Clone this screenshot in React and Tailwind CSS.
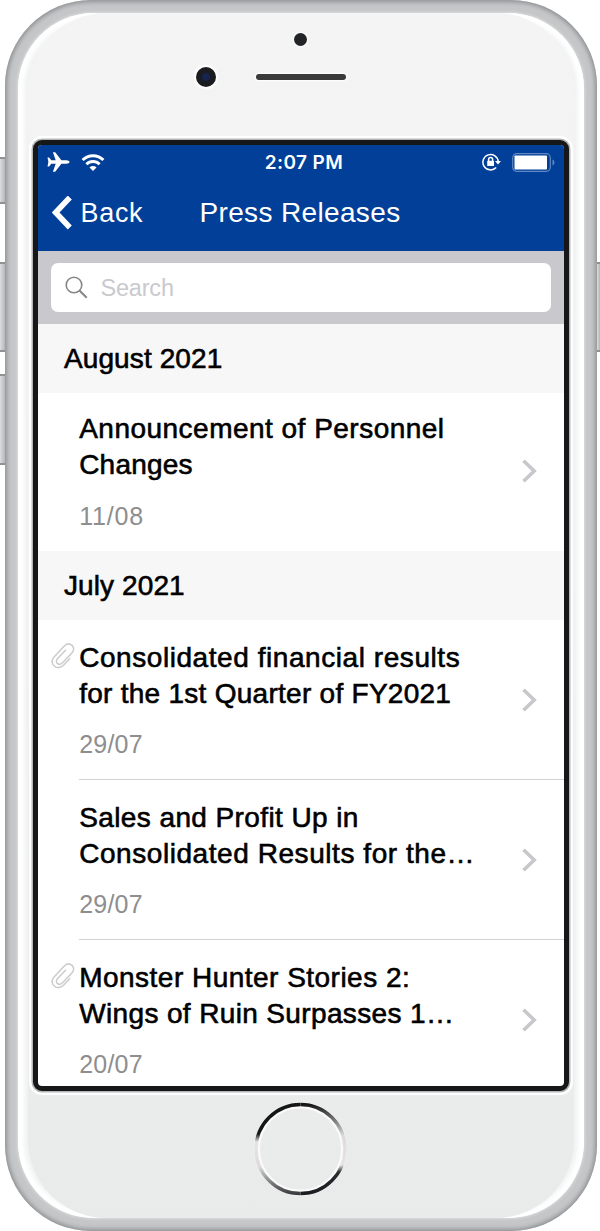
const sections = [
  {
    title: "August 2021",
    spacing: "tracking-[0.1px]",
    items: [
      {
        id: 1,
        date: "11/08",
        dateSpacing: "tracking-[0.8px]",
        lines: [
          { text: "Announcement of Personnel", spacing: "tracking-[0.48px]" },
          { text: "Changes", spacing: "tracking-[0.2px]" },
        ],
      },
    ],
  },
  {
    title: "July 2021",
    spacing: "tracking-[0.1px]",
    items: [
      {
        id: 2,
        date: "29/07",
        dateSpacing: "tracking-[0.2px]",
        hasFile: true,
        lines: [
          { text: "Consolidated financial results", spacing: "tracking-[0.56px]" },
          { text: "for the 1st Quarter of FY2021", spacing: "tracking-[0.27px]" },
        ],
      },
      {
        id: 3,
        date: "29/07",
        dateSpacing: "tracking-[0.2px]",
        lines: [
          { text: "Sales and Profit Up in", spacing: "tracking-[0.4px]" },
          { text: "Consolidated Results for the…", spacing: "tracking-[0.56px]" },
        ],
      },
      {
        id: 4,
        date: "20/07",
        dateSpacing: "tracking-[0.2px]",
        hasFile: true,
        lines: [
          { text: "Monster Hunter Stories 2:", spacing: "tracking-[0.48px]" },
          { text: "Wings of Ruin Surpasses 1…", spacing: "tracking-[0.36px]" },
        ],
      },
    ],
  },
];

const PlaneIcon = () => (
  <svg className="h-5 w-[23px]" viewBox="0 0 23 20" fill="white">
    <path d="M22.5 10c0 1-1.6 1.7-3 1.7h-5.1L8.2 19.7H5.9l2.8-8H4.3l-2.2 2.7H.5L1.4 10 .5 5.6h1.6l2.2 2.7h4.4L5.9.3h2.3l6.2 8h5.1c1.4 0 3 .7 3 1.7Z" />
  </svg>
);

const WifiIcon = () => (
  <svg className="h-[17px] w-6" viewBox="0 0 24 17" fill="none" stroke="white" strokeWidth="3">
    <path d="M1.6 6a14.7 14.7 0 0 1 20.8 0" />
    <path d="M5.4 10.3a9.4 9.4 0 0 1 13.2 0" />
    <path d="M12 17 8.5 13.5a5 5 0 0 1 7 0Z" fill="white" stroke="none" />
  </svg>
);

const RotationLockIcon = () => (
  <svg className="h-[18px] w-[19px]" viewBox="0 0 19 18" fill="none" stroke="white" strokeWidth="1.5">
    <path d="M14.2 14.5A7.7 7.7 0 1 1 16.3 8.6" />
    <path d="M13 8h6l-3 3.6Z" fill="white" stroke="none" />
    <rect x="5.2" y="7.8" width="6.8" height="5.2" rx="0.6" fill="white" stroke="none" />
    <path d="M6.6 8.2V6.6a2 2 0 0 1 4 0v1.6" />
  </svg>
);

const BatteryIcon = () => (
  <svg className="h-[19px] w-[44px]" viewBox="0 0 44 19" fill="none">
    <rect x="0.7" y="0.7" width="37.6" height="17.6" rx="4" stroke="#6088c2" strokeWidth="1.2" />
    <rect x="2.5" y="2.5" width="32.5" height="14" rx="0.8" fill="white" />
    <path d="M40.5 6.5c2.6.8 2.6 5.2 0 6Z" fill="#6088c2" />
  </svg>
);

const ClipIcon = () => (
  <svg className="h-[26px] w-6" viewBox="0 0 24 26" fill="none" stroke="#cbcbcb" strokeWidth="1.5" strokeLinecap="round">
    <path d="M18.7 15.8 13 21.8c-3 3.2-7 3.6-9.6 1.4C.3 20.6.3 17 2.9 14.2L12.8 3.4c2.7-2.8 6-3 8.2-1 2.2 2 2.2 5 .1 7.3L11.6 19.8c-1.7 1.7-3.9 1.8-5.2.6-1.4-1.3-1.3-3.3.2-4.9l7.9-8.3" />
  </svg>
);

function StatusBar() {
  return (
    <div className="flex h-[34px] items-center px-2">
      <div className="flex flex-1 items-center gap-[11px] pl-px">
        <PlaneIcon />
        <WifiIcon />
      </div>
      <p className="ml-1.5 font-[Inter] text-[19px] font-semibold leading-none tracking-[0.4px]">
        2:07 PM
      </p>
      <div className="flex flex-1 items-center justify-end gap-[11px]">
        <RotationLockIcon />
        <BatteryIcon />
      </div>
    </div>
  );
}

function NavBar() {
  return (
    <div className="flex h-[72px] items-center pb-1">
      <button className="flex w-[162px] items-center gap-[9px] pl-[14px] text-left">
        <svg className="h-[34px] w-5" viewBox="0 0 20 34" fill="none" stroke="white" strokeWidth="5.6">
          <path d="M17.8 1.5 3.6 16.5l14.2 15" />
        </svg>
        <span className="text-[27px] leading-8 tracking-[0.7px]">Back</span>
      </button>
      <h1 className="whitespace-nowrap text-[28px] leading-8 tracking-[0.35px]">Press Releases</h1>
    </div>
  );
}

function SearchBar() {
  return (
    <div className="h-[73px] bg-[#c9c8cd] px-[13px] pt-[12px]">
      <div className="flex h-[49px] items-center gap-[13px] rounded-[7px] bg-white pl-[14px]">
        <svg className="h-[23px] w-[23px]" viewBox="0 0 23 23" fill="none" stroke="#86868a" strokeWidth="1.6">
          <circle cx="9" cy="9" r="7.8" />
          <path d="m14.5 14.5 7.2 7.2" strokeWidth="2" />
        </svg>
        <span className="pt-0.5 text-[23.5px] leading-none tracking-[-0.2px] text-[#c9c9ce]">Search</span>
      </div>
    </div>
  );
}

function ReleaseRow({ item, last, single }) {
  return (
    <li className={single ? "flex h-[158px] pl-[13px] pt-[17.5px]" : "flex h-[160px] pl-[13px] pt-[19.5px]"}>
      <div className="w-7 shrink-0 pt-[3.5px]">{item.hasFile && <ClipIcon />}</div>
      <div className={last ? "flex flex-1" : "flex flex-1 border-b border-[#d3d3d5]"}>
        <div className="flex-1 pl-[0.7px]">
          {item.lines.map((line) => (
            <p
              key={line.text}
              className={`h-[36.5px] whitespace-nowrap text-[28px] leading-[36.5px] [-webkit-text-stroke:0.6px_black] ${line.spacing}`}
            >
              {line.text}
            </p>
          ))}
          <p
            className={`text-[25px] leading-8 text-[#8e8e8e] ${single ? "mt-4" : "mt-[15px]"} ${item.dateSpacing}`}
          >
            {item.date}
          </p>
        </div>
        <svg className="mr-[27px] mt-[48px] h-6 w-[15px]" viewBox="0 0 15 24" fill="none" stroke="#c7c7cc" strokeWidth="3.6">
          <path d="M1.5 1.8 12.2 12 1.5 22.2" />
        </svg>
      </div>
    </li>
  );
}

function Screen() {
  return (
    <div className="h-[951px] w-[536px] overflow-hidden rounded-[9px] border-[5px] border-[#161718] bg-white shadow-[0_0_0_1.5px_#b5b5b5,0_0_1px_4px_#ffffff]">
      <div className="bg-[#013f98] text-white">
        <StatusBar />
        <NavBar />
      </div>
      <SearchBar />
      {sections.map((section) => (
        <section key={section.title}>
          <h2
            className={`h-[69px] bg-[#f7f7f7] pl-[26.5px] text-[28px] leading-[70px] [-webkit-text-stroke:0.6px_black] ${section.spacing}`}
          >
            {section.title}
          </h2>
          <ul>
            {section.items.map((item, index) => (
              <ReleaseRow
                key={item.id}
                item={item}
                single={section.items.length === 1}
                last={index === section.items.length - 1}
              />
            ))}
          </ul>
        </section>
      ))}
    </div>
  );
}

function HomeButton() {
  return (
    <svg className="h-[94px] w-[94px]" viewBox="0 0 94 94" fill="none">
      <defs>
        <linearGradient id="left" x1="0" y1="0" x2="0" y2="1">
          <stop offset="0.05" stopColor="#161616" />
          <stop offset="0.33" stopColor="#161616" />
          <stop offset="0.42" stopColor="#e6e4e5" />
          <stop offset="0.7" stopColor="#dcdadb" />
          <stop offset="1" stopColor="#3c3c40" />
        </linearGradient>
        <linearGradient id="right" x1="0" y1="0" x2="0" y2="1">
          <stop offset="0" stopColor="#161616" />
          <stop offset="0.35" stopColor="#dcdadb" />
          <stop offset="0.68" stopColor="#e6e4e5" />
          <stop offset="0.76" stopColor="#2c2c30" />
          <stop offset="1" stopColor="#1c1c20" />
        </linearGradient>
      </defs>
      <circle cx="46.5" cy="47" r="43.5" stroke="#fafafa" strokeWidth="6" />
      <path d="M46.5 2.5a44.5 44.5 0 0 0 0 89" stroke="url(#left)" strokeWidth="3.4" />
      <path d="M46.5 2.5a44.5 44.5 0 0 1 0 89" stroke="url(#right)" strokeWidth="3.4" />
    </svg>
  );
}

const sideKey = "border-y-2 border-[#8f9193] bg-gradient-to-r from-[#dcdddd] to-[#b4b6b8]";

export default function App() {
  return (
    <div className="flex h-[1231px] w-[600px] overflow-hidden bg-white font-['Liberation_Sans',Arial,sans-serif] text-black">
      {/* Mute switch and volume keys */}
      <div className="w-[5px] shrink-0 pt-[157px]">
        <div className={`h-[47px] ${sideKey}`} />
        <div className={`mt-[58px] h-[90px] ${sideKey}`} />
        <div className={`mt-[22px] h-[91px] ${sideKey}`} />
      </div>

      {/* Metal edge, white rim, front glass */}
      <div className="w-[592px] shrink-0 rounded-[86px] bg-[#c4c6c8] p-[13px] shadow-[inset_0_0_4px_2px_#8f9193]">
        <div className="h-full rounded-[76px] bg-[#f1f3f2] px-[10px] shadow-[inset_0_0_4px_6px_#ffffff,0_0_3px_1px_#dcdddd]">
          <div className="flex h-full flex-col items-center rounded-[78px] bg-gradient-to-b from-[#f4f4f4] to-[#e9ebea] pr-px">
            <div className="flex h-[127px] w-full flex-col items-center pt-5">
              <div className="h-[13px] w-[13px] rounded-full bg-[#232427] shadow-[0_0_2px_1px_white]" />
              <div className="mt-[21px] flex w-full items-center pl-[168px]">
                <div className="flex h-5 w-5 items-center justify-center rounded-full bg-[#1b1c20] shadow-[0_0_2px_2px_white]">
                  <div className="h-2 w-2 rounded-full bg-[#17244f]" />
                </div>
                <div className="ml-10 h-[6px] w-[90px] rounded-sm bg-[#3a3a3a] shadow-[0_0_2px_1px_white]" />
              </div>
            </div>
            <Screen />
            <div className="mt-[11px]">
              <HomeButton />
            </div>
          </div>
        </div>
      </div>

      {/* Power key */}
      <div className="w-[3px] shrink-0 pt-[262px]">
        <div className={`h-[90px] ${sideKey}`} />
      </div>
    </div>
  );
}
